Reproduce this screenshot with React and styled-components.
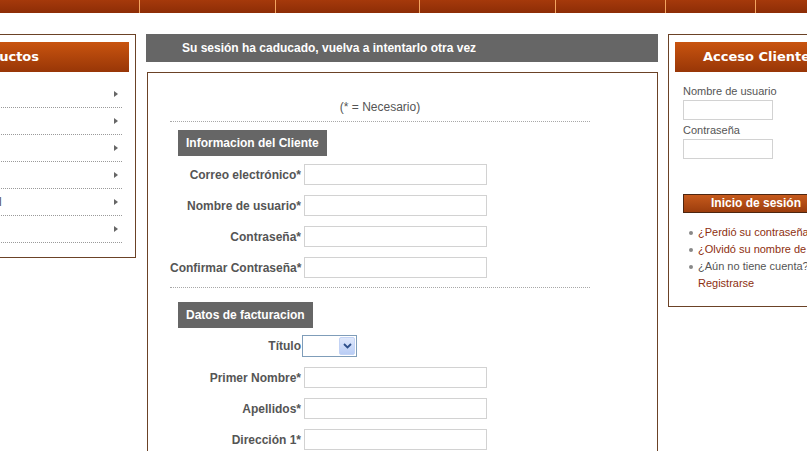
import styled, { createGlobalStyle } from "styled-components";

const GlobalStyle = createGlobalStyle`
  html, body {
    margin: 0;
    padding: 0;
    overflow: hidden;
    background: #ffffff;
  }
  * {
    box-sizing: border-box;
  }
`;

const navWidths = [140, 136, 144, 136, 110, 90, 60];

const categories = ["Libros", "Ofertas", "Juegos", "Otros", "Material", "Varios"];

const clientFields = [
  "Correo electrónico*",
  "Nombre de usuario*",
  "Contraseña*",
  "Confirmar Contraseña*",
];

const billingFields = ["Primer Nombre*", "Apellidos*", "Dirección 1*", "Dirección 2", "Ciudad*"];

export default function App() {
  return (
    <Page>
      <GlobalStyle />
      <NavBar>
        {navWidths.map((w, i) => (
          <NavItem key={i} $width={w} />
        ))}
      </NavBar>

      <Columns>
        <SideBox>
          <BoxTitle>Productos</BoxTitle>
          <CategoryList>
            {categories.map((c) => (
              <CategoryRow key={c}>
                <span>{c}</span>
                <Arrow />
              </CategoryRow>
            ))}
          </CategoryList>
        </SideBox>

        <MainColumn>
          <Notice>Su sesión ha caducado, vuelva a intentarlo otra vez</Notice>
          <FormBox>
            <Intro>(* = Necesario)</Intro>
            <SectionTitle>Informacion del Cliente</SectionTitle>
            <Fields>
              {clientFields.map((f) => (
                <FieldRow key={f}>
                  <Label>{f}</Label>
                  <TextInput type={f.startsWith("Contr") || f.startsWith("Confirmar") ? "password" : "text"} />
                </FieldRow>
              ))}
            </Fields>
            <Divider />
            <SectionTitle $spaced>Datos de facturacion</SectionTitle>
            <Fields $tight>
              <FieldRow>
                <Label>Título</Label>
                <Select>
                  <span />
                  <DropButton>
                    <svg width="9" height="6" viewBox="0 0 9 6">
                      <path d="M1 1 L4.5 4.5 L8 1" fill="none" stroke="#2d4f8a" strokeWidth="1.8" />
                    </svg>
                  </DropButton>
                </Select>
              </FieldRow>
              {billingFields.map((f) => (
                <FieldRow key={f}>
                  <Label>{f}</Label>
                  <TextInput type="text" />
                </FieldRow>
              ))}
            </Fields>
          </FormBox>
        </MainColumn>

        <LoginBox>
          <BoxTitle>Acceso Cliente</BoxTitle>
          <LoginBody>
            <SmallLabel>Nombre de usuario</SmallLabel>
            <SmallInput type="text" />
            <SmallLabel>Contraseña</SmallLabel>
            <SmallInput type="password" />
            <LoginButton>Inicio de sesión</LoginButton>
            <Links>
              <LinkItem>
                <a>¿Perdió su contraseña?</a>
              </LinkItem>
              <LinkItem>
                <a>¿Olvidó su nombre de usuario?</a>
              </LinkItem>
              <LinkItem>
                ¿Aún no tiene cuenta?
                <br />
                <a>Registrarse</a>
              </LinkItem>
            </Links>
          </LoginBody>
        </LoginBox>
      </Columns>
    </Page>
  );
}

const Page = styled.div`
  width: 807px;
  height: 451px;
  overflow: hidden;
  font-family: "Liberation Sans", Arial, sans-serif;
  font-size: 12px;
  color: #555;
`;

const NavBar = styled.div`
  display: flex;
  height: 13px;
  background: linear-gradient(#a5390b, #8d2d06);
  overflow: hidden;
`;

const NavItem = styled.div`
  flex: none;
  width: ${(p) => p.$width}px;
  height: 100%;
  border-right: 1px solid #f3a560;
`;

const Columns = styled.div`
  display: flex;
  align-items: flex-start;
  margin: 21px 0 0 -71px;
`;

const SideBox = styled.div`
  flex: none;
  width: 207px;
  border: 1px solid #6b4226;
  padding: 7px 6px 14px 7px;
`;

const BoxTitle = styled.div`
  height: 30px;
  line-height: 30px;
  padding-left: 28px;
  background: linear-gradient(#c9540f, #983607);
  color: #fff;
  font-family: "DejaVu Sans", Verdana, sans-serif;
  font-weight: bold;
  font-size: 13px;
  white-space: nowrap;
`;

const CategoryList = styled.ul`
  list-style: none;
  margin: 9px 7px 0 0;
  padding: 0;
`;

const CategoryRow = styled.li`
  display: flex;
  align-items: center;
  justify-content: space-between;
  height: 27px;
  padding: 0 4px 0 22px;
  border-bottom: 1px dotted #9a9a9a;
  color: #555;
  font-size: 12px;
`;

const Arrow = styled.span`
  width: 0;
  height: 0;
  border-top: 3px solid transparent;
  border-bottom: 3px solid transparent;
  border-left: 4px solid #666;
`;

const MainColumn = styled.div`
  flex: none;
  width: 512px;
  margin-left: 10px;
`;

const Notice = styled.div`
  height: 28px;
  line-height: 28px;
  padding-left: 36px;
  background: #666;
  color: #fff;
  font-weight: bold;
  font-size: 12px;
`;

const FormBox = styled.div`
  margin: 10px 0 0 1px;
  border: 1px solid #6b4226;
  padding: 27px 0 40px 22px;
`;

const Intro = styled.div`
  width: 420px;
  text-align: center;
  line-height: 14px;
  padding-bottom: 7px;
  border-bottom: 1px dotted #a8a8a8;
  color: #555;
`;

const SectionTitle = styled.div`
  display: inline-block;
  margin: ${(p) => (p.$spaced ? "14px" : "8px")} 0 0 8px;
  height: 26px;
  line-height: 26px;
  padding: 0 8px;
  background: #666;
  color: #fff;
  font-weight: bold;
  font-size: 12px;
`;

const Fields = styled.div`
  display: flex;
  flex-direction: column;
  gap: 10px;
  margin-top: ${(p) => (p.$tight ? "7px" : "8px")};
`;

const FieldRow = styled.div`
  display: flex;
  align-items: center;
`;

const Label = styled.label`
  flex: none;
  width: 131px;
  margin-right: 3px;
  text-align: right;
  white-space: nowrap;
  font-weight: bold;
  color: #555;
  direction: rtl;
  unicode-bidi: plaintext;
`;

const TextInput = styled.input`
  width: 183px;
  height: 21px;
  border: 1px solid #d2d2d2;
  background: #fff;
  padding: 0 3px;
  margin: 0;
  outline: none;
`;

const Select = styled.div`
  display: flex;
  justify-content: space-between;
  align-items: center;
  margin-left: -2px;
  width: 55px;
  height: 22px;
  border: 1px solid #7f9db9;
  background: #fff;
  padding: 1px;
`;

const DropButton = styled.div`
  display: flex;
  align-items: center;
  justify-content: center;
  width: 16px;
  height: 18px;
  background: linear-gradient(#dfe8fb, #b9cdf5);
  border: 1px solid #c3d3f5;
  border-radius: 2px;
`;

const Divider = styled.div`
  width: 420px;
  margin-top: 9px;
  border-bottom: 1px dotted #a8a8a8;
`;

const LoginBox = styled.div`
  flex: none;
  width: 207px;
  margin-left: 10px;
  border: 1px solid #6b4226;
  padding: 7px 6px 14px 6px;
`;

const LoginBody = styled.div`
  display: flex;
  flex-direction: column;
  align-items: flex-start;
  padding: 13px 0 0 8px;
`;

const SmallLabel = styled.label`
  font-size: 11px;
  line-height: 12px;
  color: #555;
  & + input {
    margin-top: 3px;
  }
  input + & {
    margin-top: 4px;
  }
`;

const SmallInput = styled.input`
  width: 90px;
  height: 20px;
  border: 1px solid #d2d2d2;
  margin: 0;
  padding: 0 3px;
  outline: none;
`;

const LoginButton = styled.button`
  margin-top: 35px;
  width: 143px;
  height: 19px;
  padding: 0 0 0 3px;
  border: 1px solid #4d2611;
  background: linear-gradient(#c65a1c, #9c3d0d);
  color: #fff;
  font-family: "Liberation Sans", Arial, sans-serif;
  font-weight: bold;
  font-size: 12px;
  line-height: 17px;
  cursor: pointer;
`;

const Links = styled.ul`
  list-style: none;
  margin: 11px 0 0 0;
  padding: 0;
  font-size: 11px;
  line-height: 17px;
  white-space: nowrap;
`;

const LinkItem = styled.li`
  position: relative;
  padding-left: 15px;
  color: #555;
  &::before {
    content: "";
    position: absolute;
    left: 6px;
    top: 7px;
    width: 4px;
    height: 4px;
    border-radius: 50%;
    background: #888;
  }
  a {
    color: #8e2f0f;
    text-decoration: none;
    cursor: pointer;
  }
`;
